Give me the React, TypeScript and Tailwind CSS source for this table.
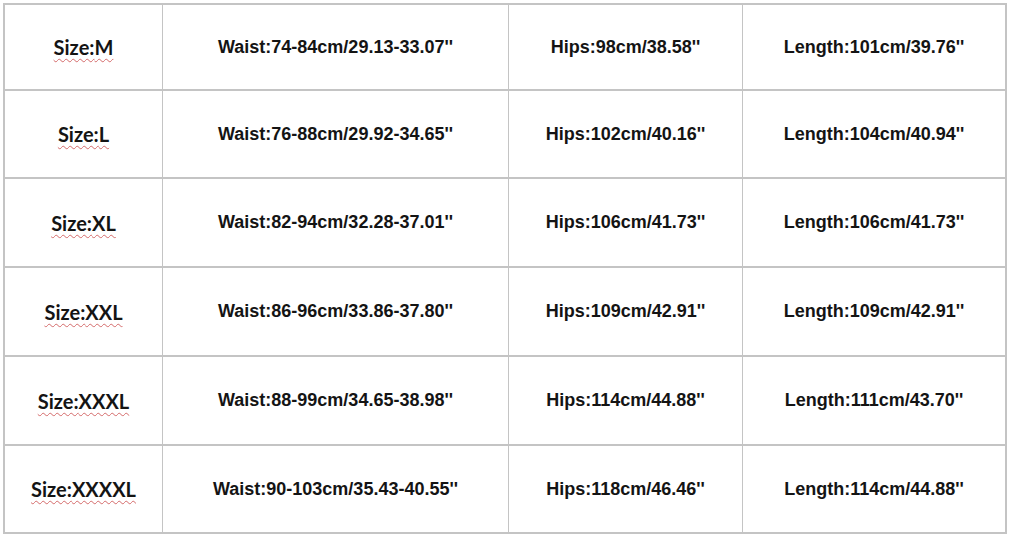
import React from "react";

const rows = [
  ["M", "Waist:74-84cm/29.13-33.07''", "Hips:98cm/38.58''", "Length:101cm/39.76''"],
  ["L", "Waist:76-88cm/29.92-34.65''", "Hips:102cm/40.16''", "Length:104cm/40.94''"],
  ["XL", "Waist:82-94cm/32.28-37.01''", "Hips:106cm/41.73''", "Length:106cm/41.73''"],
  ["XXL", "Waist:86-96cm/33.86-37.80''", "Hips:109cm/42.91''", "Length:109cm/42.91''"],
  ["XXXL", "Waist:88-99cm/34.65-38.98''", "Hips:114cm/44.88''", "Length:111cm/43.70''"],
  ["XXXXL", "Waist:90-103cm/35.43-40.55''", "Hips:118cm/46.46''", "Length:114cm/44.88''"],
];

export default function App() {
  return (
    <div className="w-[1009px] h-[537px] bg-white pt-[3px] pl-[3px]">
      <div className="grid grid-cols-[158px_346px_234px_262px] grid-rows-[86px_88px_89px_89px_89px_86px] w-[1004px] border-2 border-[#c4c4c4] text-[#141414]">
        {rows.map((r, i) => (
          <React.Fragment key={i}>
            <div
              className={`flex items-center justify-center border-r border-[#c4c4c4] ${i < 5 ? "border-b-2" : ""}`}
            >
              <span
                className="font-bold text-[20px] underline decoration-wavy decoration-[#d46a6a] decoration-1 underline-offset-[3px]"
                style={{ fontFamily: "Lato, 'Open Sans', sans-serif" }}
              >
                Size:{r[0]}
              </span>
            </div>
            {r.slice(1).map((t, j) => (
              <div
                key={j}
                className={`flex items-center justify-center border-[#c4c4c4] ${j < 2 ? "border-r" : ""} ${i < 5 ? "border-b-2" : ""}`}
              >
                <span
                  className="font-bold text-[18px]"
                  style={{ fontFamily: "'Liberation Sans', Arial, sans-serif" }}
                >
                  {t}
                </span>
              </div>
            ))}
          </React.Fragment>
        ))}
      </div>
    </div>
  );
}
